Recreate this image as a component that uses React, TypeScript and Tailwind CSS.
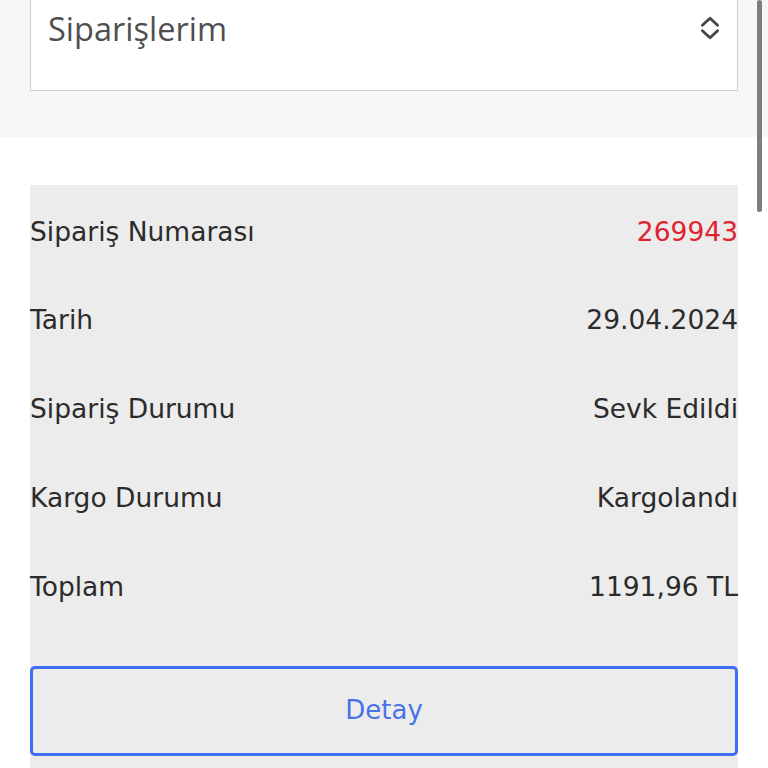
import React from "react";

const rows = [
  { label: "Sipariş Numarası", value: "269943", accent: true },
  { label: "Tarih", value: "29.04.2024" },
  { label: "Sipariş Durumu", value: "Sevk Edildi" },
  { label: "Kargo Durumu", value: "Kargolandı" },
  { label: "Toplam", value: "1191,96 TL" },
];

export default function App() {
  return (
    <div className="relative h-[768px] w-[768px] overflow-hidden bg-white">
      {/* Filter */}
      <div className="h-[137px] bg-[#f5f6f8] px-[30px]">
        <div className="flex h-[91px] w-[708px] items-start justify-between border border-t-0 border-[#cfcfcf] bg-white pl-[17px] pr-[14px] pt-[7px]">
          <span className="text-[32.5px] leading-[44px] text-[#4f4f4f] [font-family:'Open_Sans',sans-serif]">
            Siparişlerim
          </span>
          <svg width="26" height="26" viewBox="0 0 24 24" className="mt-[8px]" fill="none" stroke="#444" strokeWidth="2.6" strokeLinecap="round" strokeLinejoin="round">
            <path d="M5 9.5 12 3l7 6.5" />
            <path d="M5 14.5l7 6.5 7-6.5" />
          </svg>
        </div>
      </div>

      {/* Order card */}
      <div className="mt-[48px] w-[708px] ml-[30px] bg-[#ececec] pt-[2px] [font-family:'DejaVu_Sans',sans-serif]">
        {rows.map((r) => (
          <div key={r.label} className="flex h-[88.75px] items-center justify-between text-[26.5px] text-[#2b2b2b]">
            <span>{r.label}</span>
            <span className={r.accent ? "text-[#df2330]" : ""}>{r.value}</span>
          </div>
        ))}
        <div className="pt-[35px] pb-[20px]">
          <button className="flex h-[90px] w-full items-center justify-center rounded-[5px] border-[3px] border-[#3f6ef0] text-[26px] text-[#4a72e8]">
            Detay
          </button>
        </div>
      </div>

      {/* Scrollbar overlay */}
      <div className="absolute right-[6px] top-0 h-[212px] w-[5px] rounded-full bg-[#7d7d7d]" />
    </div>
  );
}
